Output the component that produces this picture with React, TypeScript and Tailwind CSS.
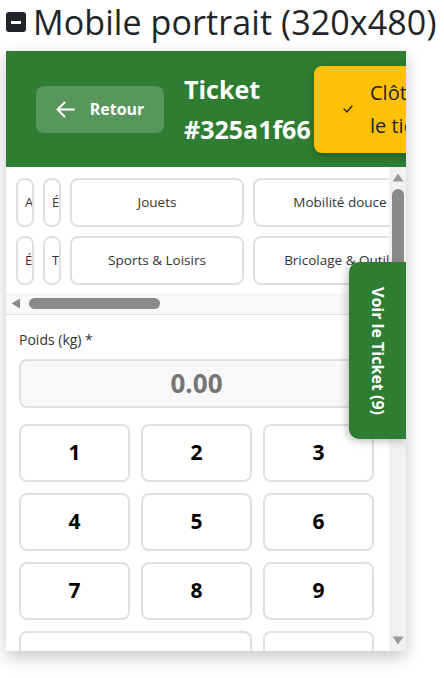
import { useState } from 'react';

const rowOne = ['Ameublement', 'Électronique', 'Jouets', 'Mobilité douce', 'Livres & Médias', 'Vaisselle', 'Décoration'];
const rowTwo = ['Électroménager', 'Textile', 'Sports & Loisirs', 'Bricolage & Outils', 'Jardinage', 'Puériculture', 'Informatique'];

const keys = ['1', '2', '3', '4', '5', '6', '7', '8', '9'];

function CategoryRow({ items }: { items: string[] }) {
  return (
    <div className="flex gap-[9px]">
      {items.map((label, i) =>
        i < 2 ? (
          <button
            key={label}
            className="h-[49px] w-[18px] shrink-0 overflow-hidden whitespace-nowrap rounded-lg border-2 border-[#e0e0e0] bg-white pl-[7px] text-left text-[13px] text-[#333]"
          >
            {label}
          </button>
        ) : (
          <button
            key={label}
            className="h-[49px] w-[174px] shrink-0 overflow-hidden whitespace-nowrap rounded-lg border-2 border-[#e0e0e0] bg-white px-2 text-center text-[13.5px] text-[#333]"
          >
            {label}
          </button>
        )
      )}
    </div>
  );
}

export default function App() {
  const [weight] = useState('0.00');

  return (
    <div className="min-h-[678px] bg-white font-['Open_Sans','Noto_Sans',sans-serif]">
      {/* Section heading */}
      <div className="flex h-[44px] items-center gap-[7px] pl-[6px]">
        <span className="flex h-[20px] w-[20px] items-center justify-center rounded-[3px] bg-[#212529]">
          <span className="h-[3px] w-[10px] bg-white" />
        </span>
        <h2 className="whitespace-nowrap text-[34px] font-medium leading-none tracking-[0.1px] text-[#212529]">Mobile portrait (320x480)</h2>
      </div>

      {/* Device frame */}
      <div className="relative ml-[6px] mt-[7px] flex h-[600px] w-[400px] flex-col overflow-hidden bg-white shadow-[0_6px_16px_rgba(0,0,0,0.22)]">
        <header className="flex h-[116px] shrink-0 items-center overflow-hidden bg-[#2e7d32] pl-[30px]">
          <button className="flex h-[47px] w-[128px] shrink-0 items-center justify-center gap-[15px] rounded-lg bg-white/20 text-[16px] font-bold text-white">
            <svg width="19" height="17" viewBox="0 0 19 17" fill="none" stroke="white" strokeWidth="2" strokeLinecap="round" strokeLinejoin="round">
              <path d="M18 8.5H1.5M8.5 1.5l-7 7 7 7" />
            </svg>
            Retour
          </button>
          <h1 className="ml-[20px] w-[130px] shrink-0 text-[25px] font-bold leading-[40px] text-white">Ticket #325a1f66</h1>
          <button className="flex h-[87px] w-[200px] shrink-0 items-center gap-[17px] rounded-lg bg-[#ffc107] pl-[29px] text-left text-[20px] leading-[33px] text-[#212529] shadow-[0_3px_8px_rgba(0,0,0,0.25)]">
            <svg width="10" height="8" viewBox="0 0 10 8" fill="none" stroke="#212529" strokeWidth="1.3" strokeLinecap="round" strokeLinejoin="round">
              <path d="M1 4l3 3 5-6" />
            </svg>
            <span>Clôturer<br />le ticket</span>
          </button>
        </header>

        <div className="flex min-h-0 flex-1">
          <div className="min-w-0 flex-1 overflow-hidden">
            {/* Categories */}
            <div className="border-b border-[#e0e0e0]">
              <div className="overflow-hidden">
                <div className="flex w-max flex-col gap-[9px] px-[10px] pt-[11px] pb-[8px]">
                  <CategoryRow items={rowOne} />
                  <CategoryRow items={rowTwo} />
                </div>
              </div>
              {/* horizontal scrollbar */}
              <div className="flex h-[21px] items-center gap-[8px] bg-[#f8f8f8] pl-[5px]">
                <svg width="10" height="11" viewBox="0 0 10 11">
                  <path d="M0.5 5.5L9 0.5V10.5Z" fill="#8a8a8a" />
                </svg>
                <div className="h-[11px] w-[131px] rounded-full bg-[#8a8a8a]" />
              </div>
            </div>

            {/* Weight entry */}
            <div className="px-[13px] pt-[15px]">
              <label className="block text-[14px] leading-[20px] text-[#333]">Poids (kg) *</label>
              <div className="mt-[9px] flex h-[49px] w-[355px] items-center justify-center rounded-lg border-2 border-[#e0e0e0] bg-[#f8f8f8] text-[26px] font-bold text-[#757575]">
                {weight}
              </div>

              <div className="mt-[16px] grid w-[355px] grid-cols-3 gap-[11px]">
                {keys.map((k) => (
                  <button key={k} className="flex h-[58px] items-center justify-center rounded-lg border-2 border-[#e0e0e0] bg-white text-[21px] font-bold text-black">
                    {k}
                  </button>
                ))}
                <button className="col-span-2 flex h-[58px] items-center justify-center rounded-lg border-2 border-[#e0e0e0] bg-white text-[21px] font-bold text-black">
                  0
                </button>
                <button className="flex h-[58px] items-center justify-center rounded-lg border-2 border-[#e0e0e0] bg-white text-[21px] font-bold text-black">
                  .
                </button>
              </div>
            </div>
          </div>

          {/* vertical scrollbar */}
          <div className="flex w-[17px] shrink-0 flex-col items-center bg-[#f1f1f1] pt-[6px] pb-[6px]">
            <svg width="12" height="9" viewBox="0 0 12 9">
              <path d="M6 0.5L11.5 8.5H0.5Z" fill="#9a9a9a" />
            </svg>
            <div className="mt-[7px] h-[170px] w-[12px] rounded-full bg-[#8a8a8a]" />
            <div className="flex-1" />
            <svg width="12" height="9" viewBox="0 0 12 9">
              <path d="M6 8.5L11.5 0.5H0.5Z" fill="#9a9a9a" />
            </svg>
          </div>
        </div>

        {/* Floating ticket tab */}
        <button className="absolute right-0 top-[211px] flex h-[177px] w-[57px] items-center justify-center rounded-l-[10px] bg-[#2e7d32] shadow-[-2px_2px_8px_rgba(0,0,0,0.25)]">
          <span className="text-[16px] font-bold text-white [writing-mode:vertical-rl]">Voir le Ticket (9)</span>
        </button>
      </div>
    </div>
  );
}
